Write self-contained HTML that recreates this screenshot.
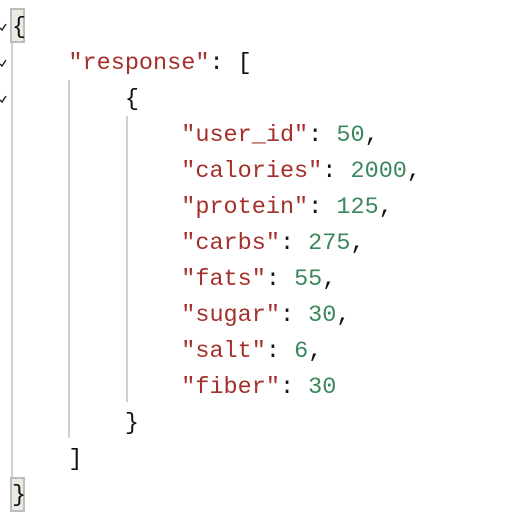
<!DOCTYPE html>
<html><head><style>
html,body{margin:0;padding:0;background:#fff;width:530px;height:532px;overflow:hidden}
.l{position:absolute;left:12px;height:36px;line-height:36px;font-family:"Liberation Mono",monospace;font-size:23.5px;white-space:pre;color:#111;margin-top:2px}
.k{color:#a3302a}.n{color:#3b875c}
.v{position:absolute;width:2px;background:#d0d0d0}
.box{position:absolute;left:10px;width:11px;height:31px;border:2px solid #bdbdbd;background:#e9ece3}
</style></head><body>
<div class="v" style="left:11px;top:40px;height:440px"></div>
<div class="v" style="left:68px;top:80px;height:358px"></div>
<div class="v" style="left:126px;top:116px;height:286px"></div>
<div class="box" style="top:8px"></div>
<div class="box" style="top:477px"></div>
<svg style="position:absolute;left:0;top:0" width="8" height="110"><g stroke="#222" stroke-width="1.4" fill="none"><path d="M0 28l2 2 4-6"/><path d="M0 64l2 2 4-6"/><path d="M0 100l2 2 4-6"/></g></svg>
<div class="l" style="top:8px">{</div>
<div class="l" style="top:44px">    <span class="k">"response"</span>: [</div>
<div class="l" style="top:80px">        {</div>
<div class="l" style="top:116px">            <span class="k">"user_id"</span>: <span class="n">50</span>,</div>
<div class="l" style="top:152px">            <span class="k">"calories"</span>: <span class="n">2000</span>,</div>
<div class="l" style="top:188px">            <span class="k">"protein"</span>: <span class="n">125</span>,</div>
<div class="l" style="top:224px">            <span class="k">"carbs"</span>: <span class="n">275</span>,</div>
<div class="l" style="top:260px">            <span class="k">"fats"</span>: <span class="n">55</span>,</div>
<div class="l" style="top:296px">            <span class="k">"sugar"</span>: <span class="n">30</span>,</div>
<div class="l" style="top:332px">            <span class="k">"salt"</span>: <span class="n">6</span>,</div>
<div class="l" style="top:368px">            <span class="k">"fiber"</span>: <span class="n">30</span></div>
<div class="l" style="top:404px">        }</div>
<div class="l" style="top:440px">    ]</div>
<div class="l" style="top:476px">}</div>
</body></html>
